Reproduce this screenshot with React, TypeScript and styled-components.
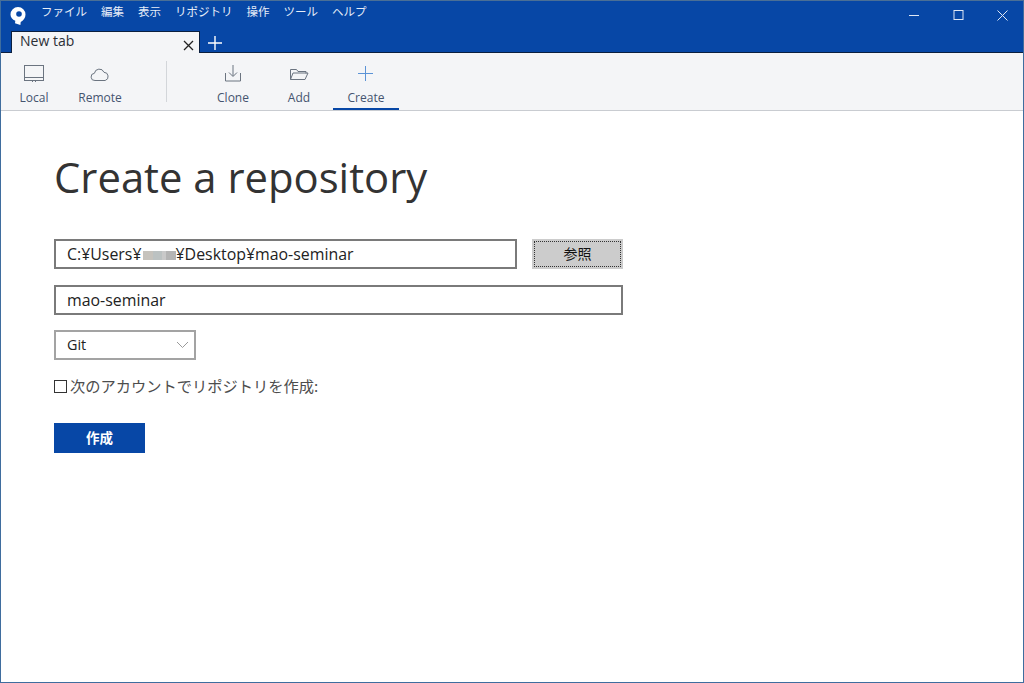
import React from "react";
import styled, { createGlobalStyle } from "styled-components";

const FONT = `"Open Sans", "Noto Sans CJK JP", sans-serif`;

const Global = createGlobalStyle`
  html, body { margin: 0; padding: 0; height: 100%; background: #fff; }
  #root { height: 100%; }
  * { box-sizing: border-box; }
`;

const Win = styled.div`
  width: 1024px; height: 683px; border: 1px solid #3f6d9e; border-top-color: #4a6f96;
  display: flex; flex-direction: column; font-family: ${FONT}; background: #fff; overflow: hidden;
`;
const Chrome = styled.div`
  background: #0747a6; height: 52px; display: flex; flex-direction: column; border-bottom: 1px solid #0b1f3f;
`;
const TitleRow = styled.div`
  height: 29px; display: flex; align-items: flex-start; padding-left: 9px;
`;
const Logo = styled.svg`
  width: 16px; height: 20px; margin-top: 5px; flex: none;
`;
const Menu = styled.nav`
  display: flex; gap: 14px; margin-left: 15px; padding-top: 2px;
`;
const MenuItem = styled.span`
  color: #e6edf8; font-size: 11.5px; line-height: 16px; font-family: "Noto Sans CJK JP", sans-serif;
`;
const WinButtons = styled.div`
  margin-left: auto; display: flex;
`;
const WinButton = styled.div`
  width: 44px; height: 29px; padding-left: 2px; display: flex; align-items: center; justify-content: center; color: #dfe8f5;
`;
const TabRow = styled.div`
  height: 22px; display: flex; align-items: flex-end; padding-left: 10px;
`;
const Tab = styled.div`
  width: 189px; height: 22px; background: #f4f5f7; border-top: 1px solid #0b1f3f; border-left: 1px solid #0b1f3f; border-right: 1px solid #0b1f3f;
  display: flex; align-items: center; justify-content: space-between; padding: 0 4px 4px 8px; margin-bottom: -1px;
  position: relative;
`;
const TabTitle = styled.span`
  font-size: 14px; line-height: 17px; color: #2b2f36;
`;
const TabClose = styled.svg`
  width: 11px; height: 11px; margin-top: 9px; margin-right: 1px;
`;
const NewTab = styled.svg`
  width: 14px; height: 14px; margin: 0 0 2px 8px;
`;
const Toolbar = styled.div`
  height: 58px; background: #f4f5f7; border-bottom: 1px solid #c9ccd1; display: flex; padding-left: 0;
`;
const ToolGroup = styled.div<{ $offset?: number }>`
  display: flex; margin-left: ${p => p.$offset ?? 0}px;
`;
const Tool = styled.div<{ $w: number; $active?: boolean }>`
  width: ${p => p.$w}px; height: 57px; display: flex; flex-direction: column; align-items: center; padding-top: 11px;
  border-bottom: 2px solid ${p => (p.$active ? "#0747a6" : "transparent")};
  color: #44546f; font-size: 12px;
  margin-left: ${p => (p.$active ? 1 : 0)}px;
`;
const ToolIcon = styled.svg`
  width: 24px; height: 20px; flex: none;
`;
const ToolLabel = styled.span`
  margin-top: 5px; line-height: 17px;
`;
const Divider = styled.div`
  width: 1px; height: 41px; background: #d3d6da; margin: 8px 0 0 33px;
`;
const Content = styled.main`
  flex: 1; padding: 37px 0 0 53px; display: flex; flex-direction: column; align-items: flex-start;
`;
const Heading = styled.h1`
  margin: 0; font-weight: 400; font-size: 41.8px; line-height: 57px; color: #333;
`;
const PathRow = styled.div`
  display: flex; align-items: center; gap: 15px; margin-top: 34px;
`;
const Field = styled.div<{ $w: number }>`
  width: ${p => p.$w}px; height: 30px; border: 2px solid #7a7a7a; padding-left: 11px; background: #fff;
  display: flex; align-items: center; font-size: 15.9px; color: #222; white-space: pre;
`;
const Redacted = styled.span`
  display: inline-block; width: 33px; height: 9px; margin: 2px 0 0 1px; filter: blur(0.6px);
  background: linear-gradient(90deg, #c6c3bd 0 30%, #bcc2c2 30% 58%, #c9c9c9 58% 70%, #b4b4b4 70% 100%);
`;
const BrowseButton = styled.button`
  width: 91px; height: 30px; background: #cccccc; border: 2px solid #cccccc; padding: 0 0 2px; outline: 1px dotted #333; outline-offset: -3px;
  font-family: "Noto Sans CJK JP", sans-serif; font-size: 14px; color: #111;
`;
const NameField = styled(Field)`
  margin-top: 16px;
`;
const Select = styled.div`
  margin-top: 15px; width: 142px; height: 30px; border: 2px solid #a3a3a3; padding: 0 5px 2px 11px; display: flex; align-items: center; justify-content: space-between;
  font-size: 14.4px; color: #222;
`;
const Chevron = styled.svg`
  width: 13px; height: 8px; margin-top: 2px;
`;
const CheckRow = styled.label`
  margin-top: 15px; height: 20px; display: flex; align-items: center; color: #4d4d4d;
  font-family: "Noto Sans CJK JP", sans-serif; font-size: 15.25px; white-space: nowrap;
`;
const CheckBox = styled.span`
  width: 13px; height: 13px; border: 1.5px solid #333; margin: 3px 3px 0 0; flex: none;
`;
const Primary = styled.button`
  margin-top: 28px; width: 91px; height: 30px; background: #0747a6; color: #fff; border: none; padding: 0 0 3px;
  font-family: "Noto Sans CJK JP", sans-serif; font-size: 13.5px; font-weight: 700;
`;

const s = { fill: "none", stroke: "#6b7480", strokeWidth: 1 };

export default function App() {
  return (
    <Win>
      <Global />
      <Chrome>
        <TitleRow>
          <Logo viewBox="0 0 16 20">
            <path fill="#fff" d="M8 1a7.5 7.5 0 0 1 7.5 7.5c0 3.4-2.2 6-4.8 7.4L10.4 19 5 17.2l.3-2.4C2.4 13.6.5 11.3.5 8.5A7.5 7.5 0 0 1 8 1z" />
            <circle cx="9" cy="8" r="2.8" fill="#0747a6" />
          </Logo>
          <Menu>
            {["ファイル", "編集", "表示", "リポジトリ", "操作", "ツール", "ヘルプ"].map(m => (
              <MenuItem key={m}>{m}</MenuItem>
            ))}
          </Menu>
          <WinButtons>
            <WinButton>
              <svg width="11" height="11" viewBox="0 0 11 11"><path d="M0 5.5h10" stroke="currentColor" fill="none" /></svg>
            </WinButton>
            <WinButton>
              <svg width="11" height="11" viewBox="0 0 11 11"><rect x="1" y=".5" width="9" height="9" stroke="currentColor" fill="none" /></svg>
            </WinButton>
            <WinButton>
              <svg width="11" height="11" viewBox="0 0 11 11"><path d="M.5.5l10 10M10.5.5l-10 10" stroke="currentColor" fill="none" /></svg>
            </WinButton>
          </WinButtons>
        </TitleRow>
        <TabRow>
          <Tab>
            <TabTitle>New tab</TabTitle>
            <TabClose viewBox="0 0 11 11"><path d="M1 1l9 9M10 1l-9 9" stroke="#222" strokeWidth="1.3" fill="none" /></TabClose>
          </Tab>
          <NewTab viewBox="0 0 14 14"><path d="M7 0v14M0 7h14" stroke="#fff" strokeWidth="1.4" fill="none" /></NewTab>
        </TabRow>
      </Chrome>
      <Toolbar>
        <ToolGroup>
          <Tool $w={66}>
            <ToolIcon viewBox="0 0 24 20">
              <rect x="2.5" y="1.5" width="19" height="15" {...s} />
              <path d="M2.5 13.5h19M10 17.5h1M13 17.5h1" {...s} />
            </ToolIcon>
            <ToolLabel>Local</ToolLabel>
          </Tool>
          <Tool $w={66}>
            <ToolIcon viewBox="0 0 24 20">
              <path d="M7 16.5a3.6 3.6 0 0 1-.6-7.2 5 5 0 0 1 9.6-1 4.2 4.2 0 0 1 1.2 8.2z" {...s} />
            </ToolIcon>
            <ToolLabel>Remote</ToolLabel>
          </Tool>
        </ToolGroup>
        <Divider />
        <ToolGroup $offset={33}>
          <Tool $w={66}>
            <ToolIcon viewBox="0 0 24 20">
              <path d="M12 1v11M8 8.5l4 4 4-4M4.5 9v8h15V9" {...s} />
            </ToolIcon>
            <ToolLabel>Clone</ToolLabel>
          </Tool>
          <Tool $w={66}>
            <ToolIcon viewBox="0 0 24 20">
              <path d="M3.5 15.5v-10h6l1.5 2h8v2M3.5 15.5L6 9h15l-3 6.5z" {...s} />
            </ToolIcon>
            <ToolLabel>Add</ToolLabel>
          </Tool>
          <Tool $w={66} $active>
            <ToolIcon viewBox="0 0 24 20">
              <path d="M11.5 2v15M4 9.5h15" fill="none" stroke="#5b93d6" strokeWidth="1" />
            </ToolIcon>
            <ToolLabel>Create</ToolLabel>
          </Tool>
        </ToolGroup>
      </Toolbar>
      <Content>
        <Heading>Create a repository</Heading>
        <PathRow>
          <Field $w={463}>C:¥Users¥<Redacted />¥Desktop¥mao-seminar</Field>
          <BrowseButton>参照</BrowseButton>
        </PathRow>
        <NameField $w={569}>mao-seminar</NameField>
        <Select>
          Git
          <Chevron viewBox="0 0 13 8"><path d="M1 1l5.5 5.5L12 1" fill="none" stroke="#9a9a9a" /></Chevron>
        </Select>
        <CheckRow><CheckBox />次のアカウントでリポジトリを作成:</CheckRow>
        <Primary>作成</Primary>
      </Content>
    </Win>
  );
}
